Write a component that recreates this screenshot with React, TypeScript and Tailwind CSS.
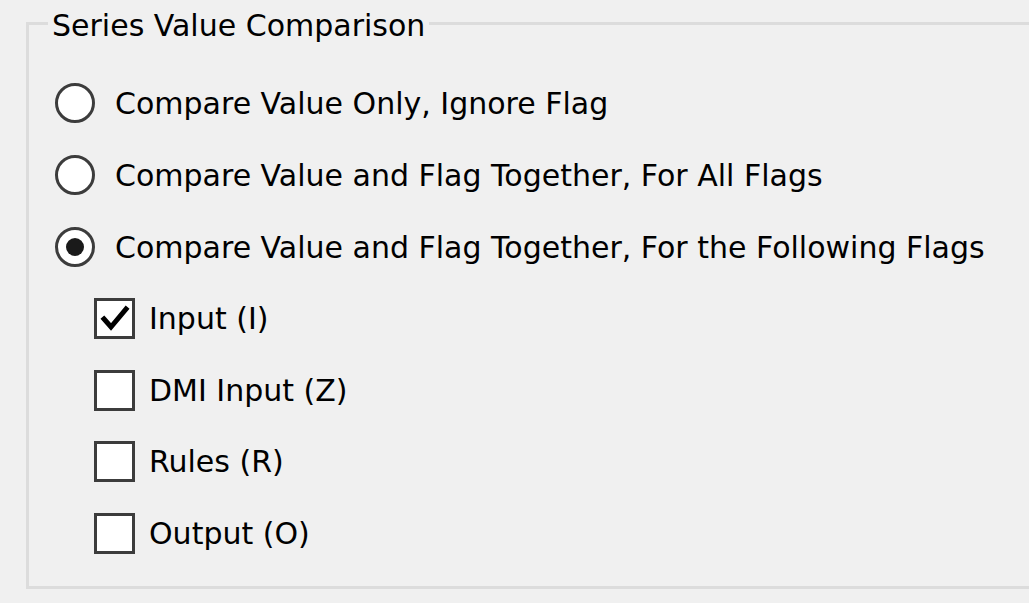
import React from "react";

const font = { fontFamily: '"DejaVu Sans", "Liberation Sans", sans-serif' };

const Radio = ({ checked, label }: { checked?: boolean; label: string }) => (
  <div className="flex items-center h-[72px] pl-[26px]">
    <div className="w-[40px] h-[40px] rounded-full border-[3px] border-[#3c3c3c] bg-white flex items-center justify-center shrink-0">
      {checked && <div className="w-[18px] h-[18px] rounded-full bg-[#1a1a1a]" />}
    </div>
    <span className="ml-[20px] text-[30px] text-black whitespace-nowrap">{label}</span>
  </div>
);

const Check = ({ checked, label }: { checked?: boolean; label: string }) => (
  <div className="flex items-center h-[71.5px] pl-[65px]">
    <div className="w-[41px] h-[41px] border-[3px] border-[#3c3c3c] bg-white flex items-center justify-center shrink-0">
      {checked && (
        <svg width="30" height="30" viewBox="0 0 30 30">
          <path d="M4 15 L11 23 L26 5" fill="none" stroke="#000" strokeWidth="5" strokeLinecap="square" />
        </svg>
      )}
    </div>
    <span className="ml-[14px] text-[30px] text-black whitespace-nowrap">{label}</span>
  </div>
);

export default function App() {
  return (
    <div className="w-[1029px] h-[603px] bg-[#f0f0f0] overflow-hidden pt-[22px] pl-[26px]" style={font}>
      <div className="relative w-[1100px] h-[567px] border-[3px] border-[#dcdcdc] pt-[42px]">
        <span className="absolute top-[-19px] left-[19px] px-[4px] bg-[#f0f0f0] text-[30px] leading-[40px] text-black whitespace-nowrap">
          Series Value Comparison
        </span>
        <Radio label="Compare Value Only, Ignore Flag" />
        <Radio label="Compare Value and Flag Together, For All Flags" />
        <Radio checked label="Compare Value and Flag Together, For the Following Flags" />
        <Check checked label="Input (I)" />
        <Check label="DMI Input (Z)" />
        <Check label="Rules (R)" />
        <Check label="Output (O)" />
      </div>
    </div>
  );
}
